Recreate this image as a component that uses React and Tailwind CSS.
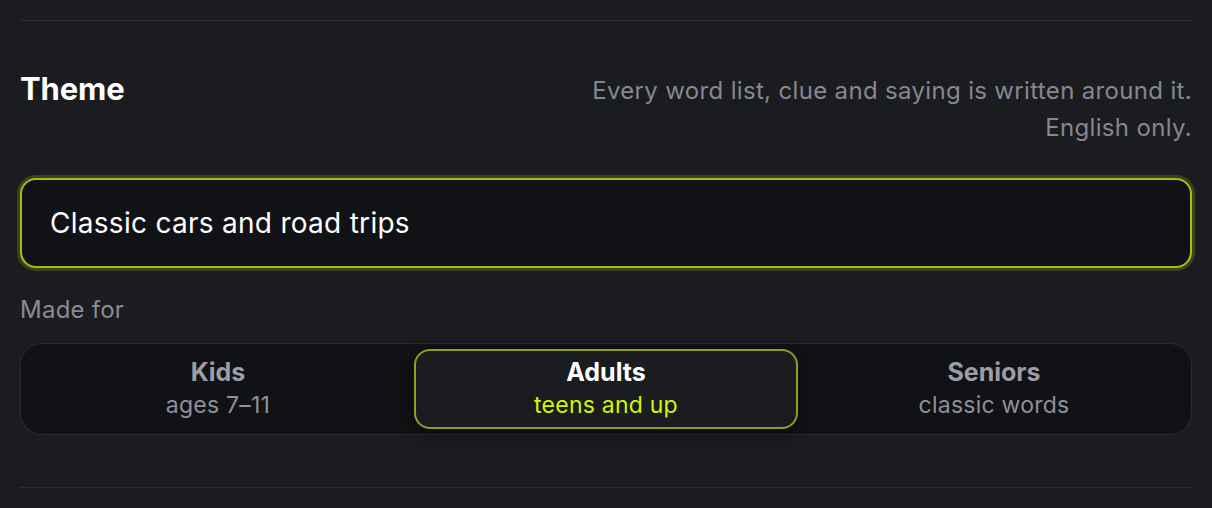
import { useState } from "react";

const options = [
  { id: "kids", label: "Kids", sub: "ages 7–11" },
  { id: "adults", label: "Adults", sub: "teens and up" },
  { id: "seniors", label: "Seniors", sub: "classic words" },
];

export default function App() {
  const [theme, setTheme] = useState("Classic cars and road trips");
  const [audience, setAudience] = useState("adults");

  return (
    <div
      className="min-h-screen bg-[#1b1c20] px-5 pt-5"
      style={{ fontFamily: "Inter, 'Noto Sans', sans-serif" }}
    >
      <section className="border-t border-b border-[#2b2c31] pt-[51px] pb-[52px]">
        {/* Header */}
        <div className="flex items-start justify-between">
          <h2 className="text-[31px] leading-[34px] font-bold text-white tracking-[-0.005em]">
            Theme
          </h2>
          <p className="text-right text-[24px] leading-[37px] tracking-[0.014em] text-[#86878f]">
            Every word list, clue and saying is written around it.
            <br />
            English only.
          </p>
        </div>

        {/* Input */}
        <input
          value={theme}
          onChange={(e) => setTheme(e.target.value)}
          className="mt-8 w-full h-[90px] rounded-2xl bg-[#111215] border-2 border-[#a3be16] ring-[3px] ring-[#3b431a] px-[28px] text-[28px] tracking-[0.01em] text-white outline-none"
        />

        <p className="mt-[30px] text-[24px] leading-[24px] tracking-[0.01em] text-[#8a8b93]">
          Made for
        </p>

        {/* Audience picker */}
        <div className="mt-[21px] grid grid-cols-3 gap-1 rounded-[22px] border border-[#2b2c31] bg-[#111215] p-[5px]">
          {options.map((o) => {
            const active = o.id === audience;
            return (
              <button
                key={o.id}
                type="button"
                onClick={() => setAudience(o.id)}
                className={
                  active
                    ? "h-[80px] rounded-2xl border-2 border-[#8ca11a] bg-[#1b1c20] shadow-[0_4px_18px_rgba(0,0,0,0.45)] flex flex-col items-center justify-center"
                    : "h-[80px] rounded-2xl border-2 border-transparent flex flex-col items-center justify-center"
                }
              >
                <span
                  className={
                    active
                      ? "text-[25px] leading-[32px] font-bold text-white"
                      : "text-[25px] leading-[32px] font-bold text-[#9c9da5]"
                  }
                >
                  {o.label}
                </span>
                <span
                  className={
                    active
                      ? "text-[23px] leading-[34px] tracking-[0.01em] text-[#d4f500]"
                      : "text-[23px] leading-[34px] tracking-[0.01em] text-[#8f9098]"
                  }
                >
                  {o.sub}
                </span>
              </button>
            );
          })}
        </div>
      </section>
    </div>
  );
}
